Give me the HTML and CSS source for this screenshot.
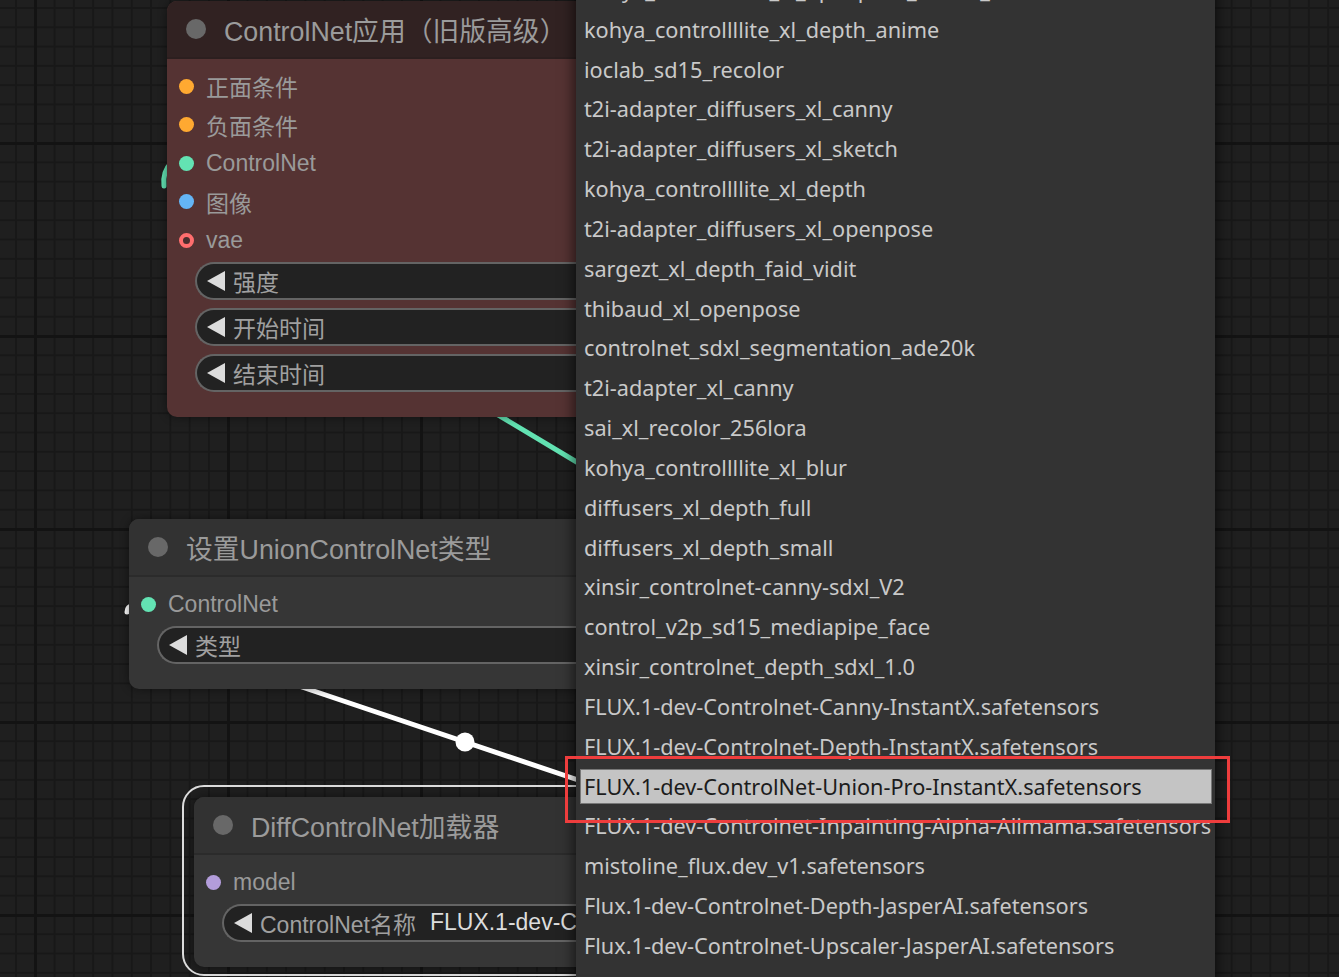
FILE: index.html
```html
<!DOCTYPE html>
<html lang="zh-CN">
<head>
  <meta charset="UTF-8">
  <title>ComfyUI - ControlNet</title>
  <link rel="stylesheet" href="styles.css">
</head>
<body>
  <div class="canvas">
    <svg class="links" width="1339" height="977" viewBox="0 0 1339 977">
      <line x1="470" y1="398" x2="590" y2="470" class="link-teal" />
      <path d="M 164 186 C 163 177, 165 169, 171 163" class="link-teal" />
      <line x1="290" y1="683" x2="590" y2="784" class="link-white" />
      <circle cx="465" cy="742" r="9.5" fill="#fff" />
      <path d="M 127 612 C 127 609, 129 606, 134 605" class="link-white" />
    </svg>

    <!-- ControlNet apply (advanced) -->
    <div class="node node-brown node-apply">
      <div class="node-title"><span class="title-dot"></span>ControlNet应用（旧版高级）</div>
      <div class="node-body">
        <div class="slot"><span class="slot-dot dot-orange"></span>正面条件</div>
        <div class="slot"><span class="slot-dot dot-orange"></span>负面条件</div>
        <div class="slot"><span class="slot-dot dot-teal"></span>ControlNet</div>
        <div class="slot"><span class="slot-dot dot-blue"></span>图像</div>
        <div class="slot"><span class="slot-dot dot-ring"></span>vae</div>
        <div class="widgets">
          <div class="widget"><svg class="arrow" width="18" height="20" viewBox="0 0 18 20"><polygon points="18,0 18,20 0,10" /></svg>强度</div>
          <div class="widget"><svg class="arrow" width="18" height="20" viewBox="0 0 18 20"><polygon points="18,0 18,20 0,10" /></svg>开始时间</div>
          <div class="widget"><svg class="arrow" width="18" height="20" viewBox="0 0 18 20"><polygon points="18,0 18,20 0,10" /></svg>结束时间</div>
        </div>
      </div>
    </div>

    <!-- Set union controlnet type -->
    <div class="node node-union">
      <div class="node-title"><span class="title-dot"></span>设置UnionControlNet类型</div>
      <div class="node-body">
        <div class="slot"><span class="slot-dot dot-teal"></span>ControlNet</div>
        <div class="widgets">
          <div class="widget"><svg class="arrow" width="18" height="20" viewBox="0 0 18 20"><polygon points="18,0 18,20 0,10" /></svg>类型</div>
        </div>
      </div>
    </div>

    <!-- DiffControlNet loader (selected) -->
    <div class="selection"></div>
    <div class="node node-loader">
      <div class="node-title"><span class="title-dot"></span>DiffControlNet加载器</div>
      <div class="node-body">
        <div class="slot"><span class="slot-dot dot-purple"></span>model</div>
        <div class="widgets">
          <div class="widget"><svg class="arrow" width="18" height="20" viewBox="0 0 18 20"><polygon points="18,0 18,20 0,10" /></svg>ControlNet名称<span class="widget-value">FLUX.1-dev-ControlNet-Union</span></div>
        </div>
      </div>
    </div>

    <!-- model dropdown -->
    <div class="menu">
      <div class="menu-item">kohya_controllllite_xl_openpose_anime_v2</div>
      <div class="menu-item">kohya_controllllite_xl_depth_anime</div>
      <div class="menu-item">ioclab_sd15_recolor</div>
      <div class="menu-item">t2i-adapter_diffusers_xl_canny</div>
      <div class="menu-item">t2i-adapter_diffusers_xl_sketch</div>
      <div class="menu-item">kohya_controllllite_xl_depth</div>
      <div class="menu-item">t2i-adapter_diffusers_xl_openpose</div>
      <div class="menu-item">sargezt_xl_depth_faid_vidit</div>
      <div class="menu-item">thibaud_xl_openpose</div>
      <div class="menu-item">controlnet_sdxl_segmentation_ade20k</div>
      <div class="menu-item">t2i-adapter_xl_canny</div>
      <div class="menu-item">sai_xl_recolor_256lora</div>
      <div class="menu-item">kohya_controllllite_xl_blur</div>
      <div class="menu-item">diffusers_xl_depth_full</div>
      <div class="menu-item">diffusers_xl_depth_small</div>
      <div class="menu-item">xinsir_controlnet-canny-sdxl_V2</div>
      <div class="menu-item">control_v2p_sd15_mediapipe_face</div>
      <div class="menu-item">xinsir_controlnet_depth_sdxl_1.0</div>
      <div class="menu-item">FLUX.1-dev-Controlnet-Canny-InstantX.safetensors</div>
      <div class="menu-item">FLUX.1-dev-Controlnet-Depth-InstantX.safetensors</div>
      <div class="menu-item active">FLUX.1-dev-ControlNet-Union-Pro-InstantX.safetensors</div>
      <div class="menu-item">FLUX.1-dev-Controlnet-Inpainting-Alpha-Alimama.safetensors</div>
      <div class="menu-item">mistoline_flux.dev_v1.safetensors</div>
      <div class="menu-item">Flux.1-dev-Controlnet-Depth-JasperAI.safetensors</div>
      <div class="menu-item">Flux.1-dev-Controlnet-Upscaler-JasperAI.safetensors</div>
      <div class="menu-item">Flux.1-dev-Controlnet-Surface-Normals-JasperAI.safetensors</div>
    </div>

    <div class="mark"></div>
  </div>
</body>
</html>
```

FILE: styles.css
```css
* {
  box-sizing: border-box;
  margin: 0;
  padding: 0;
}

body {
  width: 1339px;
  height: 977px;
  overflow: hidden;
  font-family: "Liberation Sans", "Noto Sans CJK SC", sans-serif;
  background-color: #1f1f1f;
  background-image:
    linear-gradient(to right, #131313 3px, transparent 3px),
    linear-gradient(to bottom, #131313 3px, transparent 3px),
    linear-gradient(to right, #181818 2px, transparent 2px),
    linear-gradient(to bottom, #181818 2px, transparent 2px);
  background-size: 193px 193px, 193px 193px, 19.3px 19.3px, 19.3px 19.3px;
  background-position: 34px 0, 0 142px, 15px 0, 0 7px;
}

.canvas {
  position: relative;
  width: 100%;
  height: 100%;
}

.links {
  position: absolute;
  left: 0;
  top: 0;
}

.link-teal {
  stroke: #62e2b2;
  stroke-width: 5;
  stroke-linecap: round;
  fill: none;
}

.link-white {
  stroke: #fff;
  stroke-width: 5;
  stroke-linecap: round;
  fill: none;
}

/* nodes */
.node {
  position: absolute;
  border-radius: 10px;
  background: #363636;
  box-shadow: 0 0 10px rgba(0, 0, 0, 0.45);
  overflow: hidden;
}

.node-apply {
  left: 167px;
  top: 1px;
  width: 450px;
}

.node-union {
  left: 129px;
  top: 519px;
  width: 480px;
}

.node-loader {
  left: 194px;
  top: 797px;
  width: 420px;
}

.node-title {
  height: 58px;
  display: flex;
  align-items: center;
  gap: 18px;
  padding-left: 19px;
  font-size: 26.8px;
  color: #9b9b9b;
  white-space: nowrap;
  background: #323232;
  border-bottom: 2px solid #2b2b2b;
}

.title-dot {
  width: 20px;
  height: 20px;
  border-radius: 50%;
  background: #686868;
  flex-shrink: 0;
}

.node-brown {
  background: #553333;
}

.node-brown .node-title {
  background: #312222;
  border-bottom-color: #2c1f1f;
}

.node-body {
  padding: 8px 0 25px;
}

.slot {
  height: 38.5px;
  display: flex;
  align-items: center;
  gap: 12px;
  padding-left: 12px;
  font-size: 23px;
  color: #9a9a9a;
}

.slot-dot {
  width: 15px;
  height: 15px;
  border-radius: 50%;
}

.dot-orange { background: #ffa931; }
.dot-teal { background: #63e3b3; }
.dot-blue { background: #64b5f6; }
.dot-purple { background: #b39ddb; }

.dot-ring {
  border: 4px solid #ff6e6e;
  background: #4a2e2e;
}

.widgets {
  display: flex;
  flex-direction: column;
  gap: 8px;
  margin-top: 2px;
}

.widget {
  height: 38px;
  margin: 0 0 0 28px;
  display: flex;
  align-items: center;
  gap: 8px;
  padding-left: 10px;
  border: 2px solid #646464;
  border-right: none;
  border-radius: 19px 0 0 19px;
  background: #222;
  font-size: 23px;
  color: #a0a0a0;
  white-space: nowrap;
  overflow: hidden;
}

.arrow {
  fill: #dcdcdc;
  flex-shrink: 0;
}

.widget-value {
  margin-left: 6px;
  color: #dddddd;
}

.selection {
  position: absolute;
  left: 182px;
  top: 785px;
  width: 460px;
  height: 191px;
  border: 2px solid #dcdcdc;
  border-radius: 22px;
}

/* dropdown */
.menu {
  position: absolute;
  left: 576px;
  top: -30px;
  width: 639px;
  display: flex;
  flex-direction: column;
  background: #333;
  box-shadow: 0 0 12px 3px rgba(0, 0, 0, 0.55);
  font-family: "Noto Sans", "Noto Sans CJK SC", sans-serif;
  font-size: 21.7px;
  color: #c9c9c9;
}

.menu-item {
  height: 35.83px;
  line-height: 35.83px;
  margin: 2px 3px 2px 4px;
  padding-left: 4px;
  white-space: nowrap;
}

.menu-item.active {
  background: #c4c4c4;
  border: 1px solid #777;
  line-height: 33.83px;
  padding-left: 3px;
  color: #1c1c1c;
}

.mark {
  position: absolute;
  left: 565px;
  top: 756px;
  width: 665px;
  height: 67px;
  border: 3px solid #ee3d3d;
}
```
